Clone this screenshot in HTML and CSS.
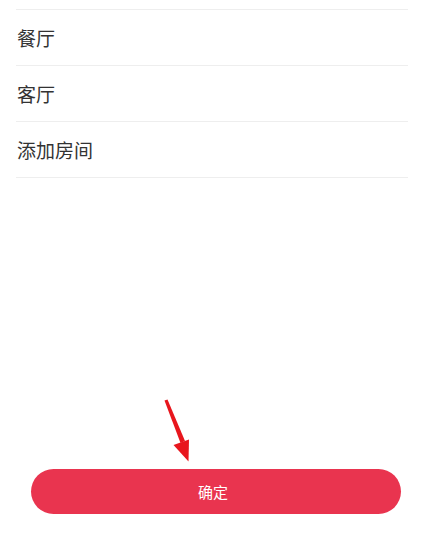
FILE: index.html
```html
<html>
<head>
    <meta charset='UTF-8'>
    <meta name='viewport' content='width=device-width, initial-scale=1.0'>
    <title>选择房间</title>
    <link rel="stylesheet" href="styles.css">
</head>
<body>
    <div class='page'>
        <ul class='room-list'>
            <li>餐厅</li>
            <li>客厅</li>
            <li>添加房间</li>
        </ul>

        <div class='footer'>
            <svg class='pointer' width='40' height='70' viewBox='155 395 40 70'>
                <polygon points='164.5,400.5 167.5,399.5 185,441 180.5,443' fill='#e8161d'/>
                <polygon points='173.5,445 189,439.5 188.5,461.5' fill='#e8161d'/>
            </svg>
            <button class='confirm'>确定</button>
        </div>
    </div>
</body>
</html>
```

FILE: styles.css
```css
html, body {
    margin: 0;
    padding: 0;
    background: #fff;
    font-family: 'Noto Sans CJK SC', 'Noto Sans', sans-serif;
}

.page {
    display: flex;
    flex-direction: column;
    height: 533px;
    position: relative;
}

.room-list {
    list-style: none;
    margin: 9px 16px 0 16px;
    padding: 0;
    border-top: 1px solid #eeeeee;
}

.room-list li {
    box-sizing: border-box;
    height: 56px;
    display: flex;
    align-items: center;
    padding-left: 1px;
    font-size: 19px;
    color: #333;
    border-bottom: 1px solid #eeeeee;
}

.footer {
    margin-top: auto;
    padding: 0 23px 19px 31px;
}

.confirm {
    display: block;
    width: 100%;
    height: 45px;
    border: none;
    border-radius: 23px;
    background: #e9344f;
    color: #fff;
    font-family: inherit;
    font-size: 15px;
    padding: 0;
    text-indent: -6px;
}

/* annotation arrow over the button */
.pointer {
    position: absolute;
    left: 155px;
    top: 395px;
}
```
